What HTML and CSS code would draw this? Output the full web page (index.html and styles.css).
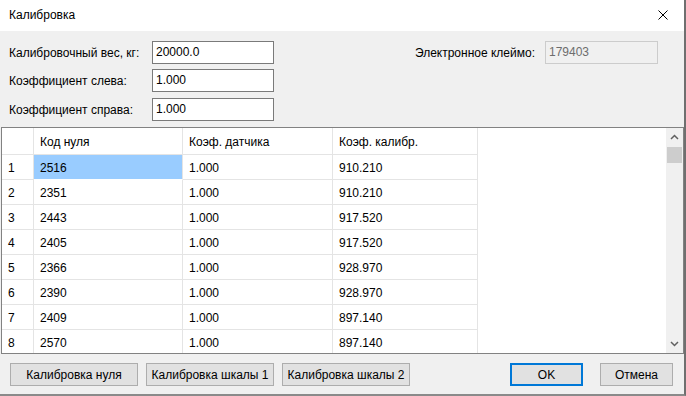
FILE: index.html
```html
<!DOCTYPE html>
<html>
<head>
    <title>Калибровка</title>
    <meta charset="utf-8">
    <link rel="stylesheet" href="styles.css">
</head>
<body>
    <div class="window">
        <div class="titlebar">
            <span class="title">Калибровка</span>
            <svg class="close" width="10" height="10" viewBox="0 0 10 10">
                <path d="M0.5 0.5 L9.5 9.5 M9.5 0.5 L0.5 9.5" stroke="#000" stroke-width="1" fill="none"/>
            </svg>
        </div>

        <div class="form">
            <div class="fields">
                <div class="field">
                    <label>Калибровочный вес, кг:</label>
                    <div class="input">20000.0</div>
                </div>
                <div class="field">
                    <label>Коэффициент слева:</label>
                    <div class="input">1.000</div>
                </div>
                <div class="field">
                    <label>Коэффициент справа:</label>
                    <div class="input">1.000</div>
                </div>
            </div>
            <div class="stamp">
                <label>Электронное клеймо:</label>
                <div class="input disabled">179403</div>
            </div>
        </div>

        <div class="grid-box">
            <table class="grid">
                <thead>
                    <tr>
                        <th class="rownum"></th>
                        <th class="c1">Код нуля</th>
                        <th class="c2">Коэф. датчика</th>
                        <th class="c3">Коэф. калибр.</th>
                        <th class="rest"></th>
                    </tr>
                </thead>
                <tbody id="rows"></tbody>
            </table>
            <div class="scrollbar">
                <svg class="arrow" width="9" height="6" viewBox="0 0 9 6"><path d="M1 5 L4.5 1.5 L8 5" stroke="#606060" stroke-width="1.5" fill="none"/></svg>
                <div class="thumb"></div>
                <div class="track"></div>
                <svg class="arrow" width="9" height="6" viewBox="0 0 9 6"><path d="M1 1 L4.5 4.5 L8 1" stroke="#606060" stroke-width="1.5" fill="none"/></svg>
            </div>
        </div>

        <div class="buttons">
            <button class="btn wide">Калибровка нуля</button>
            <button class="btn wide">Калибровка шкалы 1</button>
            <button class="btn wide">Калибровка шкалы 2</button>
            <div class="spacer"></div>
            <button class="btn small default">OK</button>
            <button class="btn small">Отмена</button>
        </div>
    </div>

    <script>
    const data = [
        ['2516', '1.000', '910.210'],
        ['2351', '1.000', '910.210'],
        ['2443', '1.000', '917.520'],
        ['2405', '1.000', '917.520'],
        ['2366', '1.000', '928.970'],
        ['2390', '1.000', '928.970'],
        ['2409', '1.000', '897.140'],
        ['2570', '1.000', '897.140']
    ];

    const tbody = document.getElementById('rows');
    data.forEach((row, i) => {
        const sel = i === 0 ? ' selected' : '';
        tbody.innerHTML += `
        <tr>
            <td class="rownum">${i + 1}</td>
            <td class="c1${sel}">${row[0]}</td>
            <td class="c2">${row[1]}</td>
            <td class="c3">${row[2]}</td>
            <td class="rest"></td>
        </tr>`;
    });
    </script>
</body>
</html>
```

FILE: styles.css
```css
* { box-sizing: border-box; }

body {
    margin: 0;
    background: #ffffff;
    font-family: "Liberation Sans", Arial, sans-serif;
    font-size: 12px;
    color: #000;
}

.window {
    width: 686px;
    height: 396px;
    background: #f0f0f0;
    border-right: 2px solid #6f6f6f;
    border-bottom: 2px solid #8a8a8a;
    display: flex;
    flex-direction: column;
    overflow: hidden;
}

/* title bar */
.titlebar {
    height: 31px;
    background: #ffffff;
    display: flex;
    align-items: center;
    padding: 0 9px 1px 9px;
}
.title { flex: 1; }
.close { margin-right: 7px; }

/* top fields */
.form {
    display: flex;
    padding: 10px 26px 0 9px;
    height: 96px;
}
.fields { display: flex; flex-direction: column; gap: 5px; }
.field { display: flex; align-items: center; }
.field:last-child { margin-top: 1px; }
.field label { width: 143px; }
.input {
    width: 122px;
    height: 23px;
    border: 1px solid #7a7a7a;
    background: #fff;
    padding: 0 3px;
    line-height: 21px;
}
.stamp {
    margin-left: auto;
    display: flex;
    align-items: center;
    align-self: flex-start;
}
.stamp label { margin-right: 10px; }
.input.disabled {
    width: 113px;
    border-color: #cccccc;
    background: #f0f0f0;
    color: #6d6d6d;
}

/* data grid */
.grid-box {
    margin: 0 0 0 1px;
    height: 227px;
    border: 1px solid #828282;
    background: #fff;
    display: flex;
    overflow: hidden;
}
.grid {
    flex: 1;
    border-collapse: separate;
    border-spacing: 0;
    table-layout: fixed;
    align-self: flex-start;
}
.grid th, .grid td {
    font-weight: normal;
    text-align: left;
    padding: 1px 0 0 6px;
    border-right: 1px solid #e4e4e4;
    border-bottom: 1px solid #e4e4e4;
    white-space: nowrap;
}
.grid th { height: 27px; }
.grid td { height: 25px; }
.grid .rownum { width: 32px; }
.grid .c1 { width: 149px; }
.grid .c2 { width: 150px; }
.grid .c3 { width: 145px; }
.grid .rest { border: none; }
.grid td.selected { background: #99ccff; border-bottom-color: #fff; }

.scrollbar {
    width: 17px;
    background: #f0f0f0;
    display: flex;
    flex-direction: column;
    align-items: center;
}
.arrow { margin: 6px 0; flex: none; }
.thumb {
    width: 15px;
    height: 16px;
    background: #cdcdcd;
    margin-top: 1px;
}
.track { flex: 1; }

/* bottom buttons */
.buttons {
    display: flex;
    padding: 9px 11px 0 10px;
    gap: 8px;
}
.btn {
    height: 23px;
    font: inherit;
    color: #000;
    background: #e1e1e1;
    border: 1px solid #adadad;
    padding: 0;
}
.btn.wide { width: 128px; }
.btn.small { width: 73px; }
.btn.default { border: 2px solid #0078d7; margin-right: 9px; }
.spacer { flex: 1; }
```
